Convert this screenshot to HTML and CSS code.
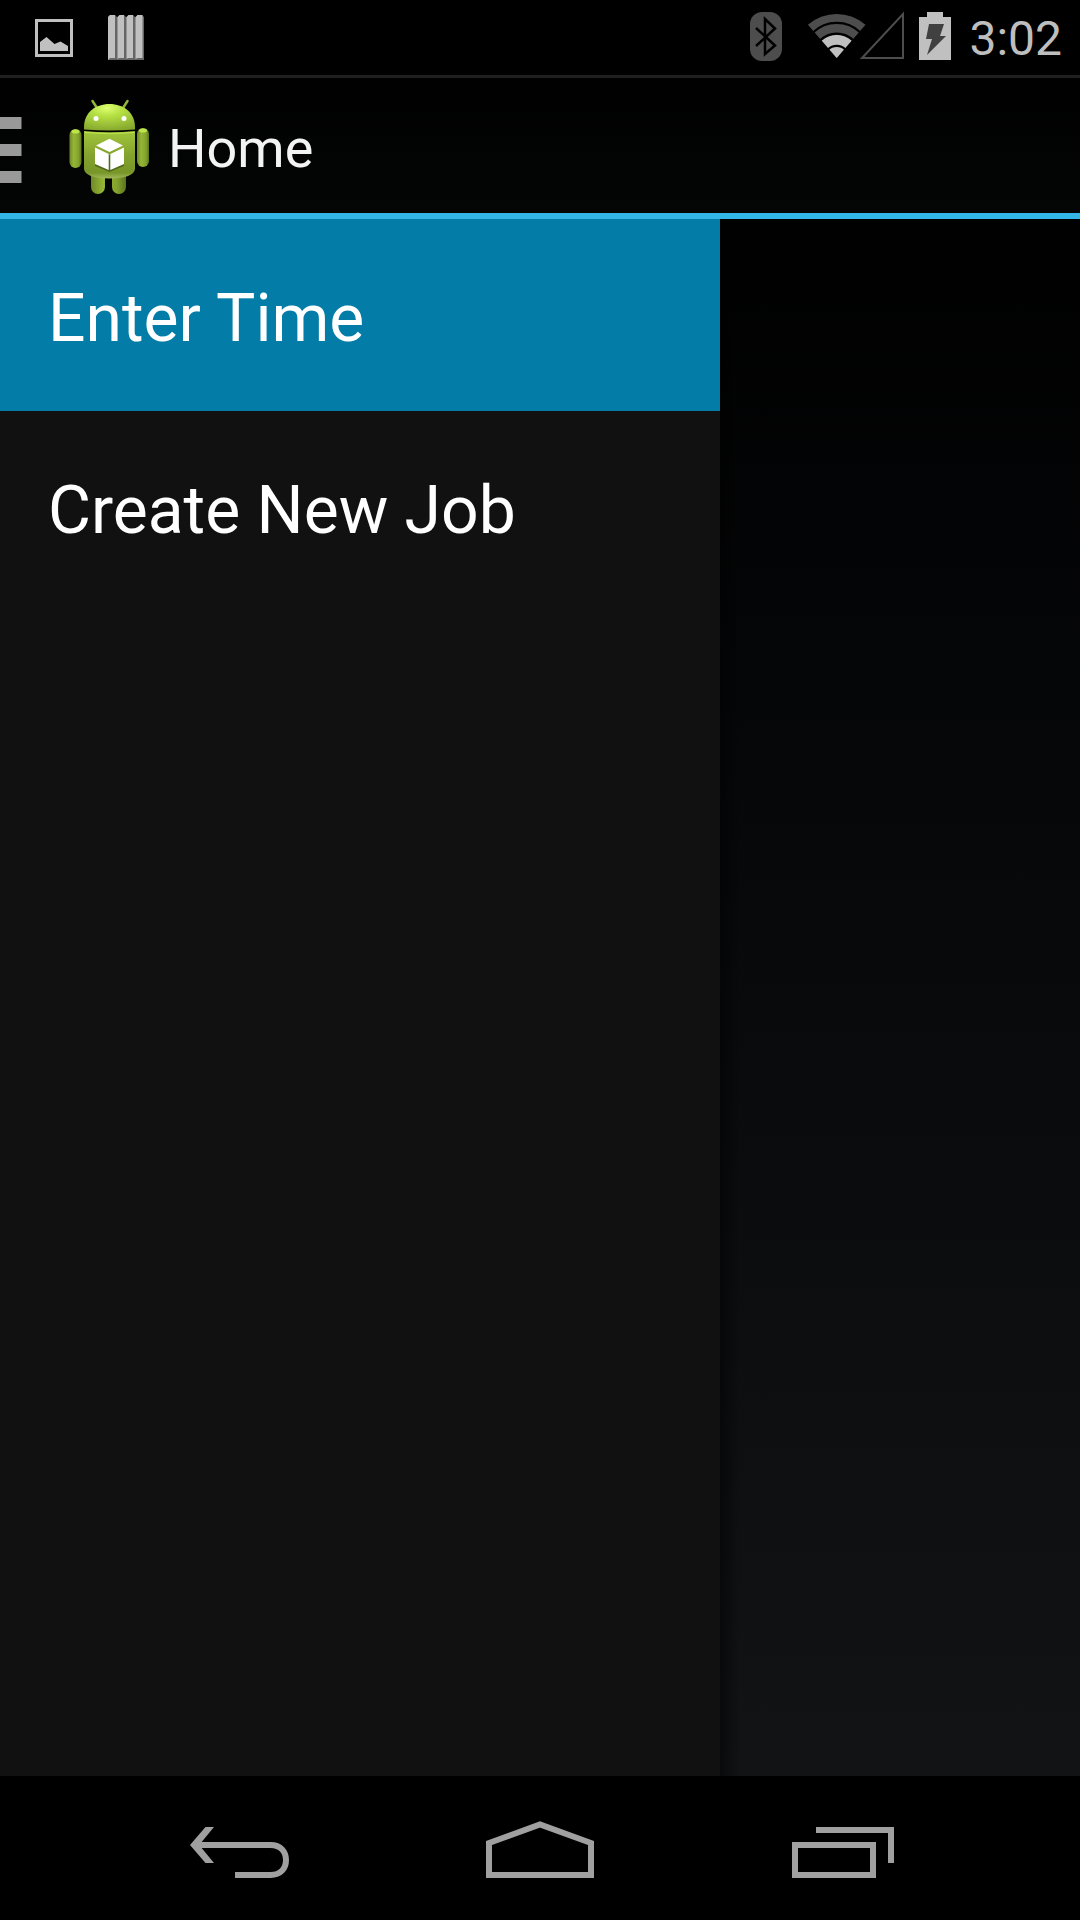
FILE: index.html
```html
<!DOCTYPE html>
<html lang="en">
<head>
<meta charset="utf-8">
<meta name="viewport" content="width=device-width, initial-scale=1">
<title>Home</title>
<link rel="stylesheet" href="styles.css">
</head>
<body>
<div class="status-bar">
  <div class="notifications">
    <svg width="38" height="75" viewBox="35 0 38 75" aria-hidden="true">
      <rect x="36.500" y="20.500" width="35" height="35" fill="none" stroke="#c0c0c0" stroke-width="3"/>
      <path d="M40 51V42L46.500 37 54.500 44 60.500 41.500 68 46V51Z" fill="#c0c0c0"/>
    </svg>
    <svg width="36" height="75" viewBox="108 0 36 75" aria-hidden="true">
      <path d="M108 17l2-2h5l2 2h1l2-2h4l2 2h1l2-2h4l2 2h1l2-2h4l2 2V60H108Z" fill="#666"/>
      <path d="M108 17l2-2h5v43h-5l-2 2ZM117.500 17l2-2h4.500v43h-5l-1.500 1ZM126.500 17l2-2h4.500v43h-5l-1.500 1ZM135.500 17l2-2h5v43h-5l-2 1Z" fill="#c0c0c0"/>
    </svg>
  </div>
  <div class="system">
    <svg class="bluetooth" width="32" height="75" viewBox="750 0 32 75" aria-hidden="true">
      <rect x="750" y="12" width="32" height="49" rx="12" fill="#4d4d4d"/>
      <path d="M756 28L775 45.500 765 54V19L775 28.500 756 46" fill="none" stroke="#000" stroke-width="2.500"/>
    </svg>
    <svg class="signals" width="98" height="75" viewBox="807 0 98 75" aria-hidden="true">
      <path d="M836.700 58L807.900 24.700A44 44 0 0 1 865.500 24.700Z" fill="#4d4d4d"/>
      <path d="M836.700 58L821.700 40.600A23 23 0 0 1 851.700 40.600Z" fill="#c0c0c0"/>
      <path d="M813 32.500A34 34 0 0 1 860.400 32.500M820 40.500A23.500 23.500 0 0 1 853.400 40.500M828 49.500A12.200 12.200 0 0 1 845.400 49.500" fill="none" stroke="#000" stroke-width="2.200"/>
      <path d="M862 58H903V14Z" fill="none" stroke="#4d4d4d" stroke-width="2"/>
    </svg>
    <svg class="battery" width="32" height="75" viewBox="919 0 32 75" aria-hidden="true">
      <path d="M919 17h8v-5h16v5h8v43h-32Z" fill="#c0c0c0"/>
      <path d="M929 24h15l-4 12h6l-19 19 5-16h-6Z" fill="#404040"/>
    </svg>
    <time class="clock">3:02</time>
  </div>
</div>

<header class="action-bar">
  <button class="drawer-toggle" type="button" aria-label="Close navigation drawer">
    <svg width="24" height="96" viewBox="0 99 24 96" aria-hidden="true">
      <path d="M0 117h21.500v12H0ZM0 144h21.500v12H0ZM0 171h21.500v12H0Z" fill="#999"/>
    </svg>
    <svg width="90" height="96" viewBox="0 0 90 96" aria-hidden="true">
      <defs>
        <linearGradient id="limb" x1="0" x2="1" y1="0" y2="0">
          <stop offset="0" stop-color="#6f8a26"/><stop offset=".35" stop-color="#95b636"/><stop offset=".75" stop-color="#82a22c"/><stop offset="1" stop-color="#5b731e"/>
        </linearGradient>
        <linearGradient id="torso" x1="0" x2="0" y1="0" y2="1">
          <stop offset="0" stop-color="#a2c63b"/><stop offset=".5" stop-color="#84a32e"/><stop offset=".88" stop-color="#789629"/><stop offset="1" stop-color="#a3b95c"/>
        </linearGradient>
        <radialGradient id="head" cx=".45" cy=".15" r=".9">
          <stop offset="0" stop-color="#dcff70"/><stop offset=".35" stop-color="#b5e043"/><stop offset="1" stop-color="#84a52d"/>
        </radialGradient>
      </defs>
      <path d="M26.500 2L31 9M61.500 2L57 9" stroke="#93b53a" stroke-width="2.500" stroke-linecap="round"/>
      <path d="M25 72h14v16a7 7 0 0 1-14 0ZM46 72h14v16a7 7 0 0 1-14 0Z" fill="url(#limb)"/>
      <rect x="3.500" y="30" width="12" height="39" rx="6" fill="url(#limb)"/>
      <rect x="71" y="29" width="12" height="39" rx="6" fill="url(#limb)"/>
      <ellipse cx="9.500" cy="32.500" rx="4" ry="2" fill="#bce44b"/>
      <ellipse cx="77" cy="31.500" rx="4" ry="2" fill="#bce44b"/>
      <path d="M18 28C18 14 29 5 43.500 5S69 14 69 28V30.500Q44 32.500 18 30.500Z" fill="url(#head)"/>
      <path d="M18 32Q44 34.500 69 32V70Q68 79 43.500 79.500 19 79 18 70Z" fill="url(#torso)"/>
      <path d="M19 33.500Q44 36 68 33.500" fill="none" stroke="#bfe64c"/>
      <circle cx="30" cy="19.500" r="2.500" fill="#fff"/><circle cx="58" cy="19.500" r="2.500" fill="#fff"/>
      <path d="M29 49L43.500 56 58 49V67L43.500 73 29 67Z" fill="#536a1c"/>
      <path d="M43.500 39.700L57 46.500 43.500 53 30 46.500ZM29 48.500L42.700 55V71L29 65ZM58 48.500L44.300 55V71L58 65Z" fill="#fff"/>
    </svg>
  </button>
  <h1 class="title">Home</h1>
</header>

<div class="screen">
  <nav class="drawer">
    <a class="item selected" href="#enter-time" aria-current="page">Enter Time</a>
    <a class="item" href="#create-job">Create New Job</a>
  </nav>
  <main class="content"></main>
</div>

<footer class="nav-bar">
  <button type="button" aria-label="Back">
    <svg width="108" height="60" viewBox="0 0 108 60" aria-hidden="true">
      <path d="M14 27H84.500C95 27 100 34 100 42S95 57 84.500 57H49" fill="none" stroke="#a0a0a0" stroke-width="6"/>
      <path d="M4 27L19.500 9H28L14 26V28L28 45H19.500Z" fill="#a0a0a0"/>
    </svg>
  </button>
  <button type="button" aria-label="Home screen">
    <svg width="108" height="60" viewBox="0 0 108 60" aria-hidden="true">
      <path d="M3 57V25L54 6.500 105 25V57Z" fill="none" stroke="#a0a0a0" stroke-width="6"/>
    </svg>
  </button>
  <button type="button" aria-label="Recent apps">
    <svg width="108" height="60" viewBox="0 0 108 60" aria-hidden="true">
      <path d="M9 27H87V57H9ZM30 12H105V45" fill="none" stroke="#a0a0a0" stroke-width="6"/>
    </svg>
  </button>
</footer>
</body>
</html>
```
FILE: styles.css
```css
* {
  box-sizing: border-box;
}

body {
  margin: 0;
  min-height: 100vh;
  display: flex;
  flex-direction: column;
  background: linear-gradient(#000 10%, #060709 40%, #111315 92%);
  color: #fff;
  font-family: Roboto, "Noto Sans", sans-serif;
}

svg {
  display: block;
  flex: none;
}

button {
  margin: 0;
  padding: 0;
  border: 0;
  background: none;
}

.status-bar {
  display: flex;
  justify-content: space-between;
  height: 75px;
  padding: 0 18px 0 35px;
  background: #000;
}

.notifications {
  display: flex;
  gap: 35px;
}

.system {
  display: flex;
  gap: 14px;
}

.bluetooth {
  margin-right: 11px;
}

.clock {
  margin-left: 4px;
  color: #bebebe;
  font-size: 48px;
  line-height: 78px;
}

.action-bar {
  display: flex;
  align-items: center;
  gap: 12px;
  height: 144px;
  padding-top: 3px;
  border-top: 3px solid #202020;
  border-bottom: 6px solid #33b5e5;
  background: linear-gradient(#000, #040605);
}

.drawer-toggle {
  display: flex;
  gap: 42px;
}

.title {
  margin: 0;
  padding-top: 4px;
  color: #f3f3f3;
  font-size: 54px;
  font-weight: 400;
  line-height: 64px;
}

.screen {
  flex: 1;
  display: grid;
  grid-template-columns: 2fr 1fr;
}

.drawer {
  background: #111;
}

.item {
  display: block;
  padding: 8px 48px 0;
  color: #fff;
  font-size: 66px;
  line-height: 184px;
  text-decoration: none;
}

.item.selected {
  background: #037ca7;
}

.content {
  background: linear-gradient(to right, rgba(0, 0, 0, 0.5), transparent 20px);
}

.nav-bar {
  display: grid;
  grid-template-columns: repeat(3, 1fr);
  height: 144px;
  padding: 0 90px;
  background: #000;
}

.nav-bar button {
  display: flex;
  align-items: center;
  justify-content: center;
}
```
